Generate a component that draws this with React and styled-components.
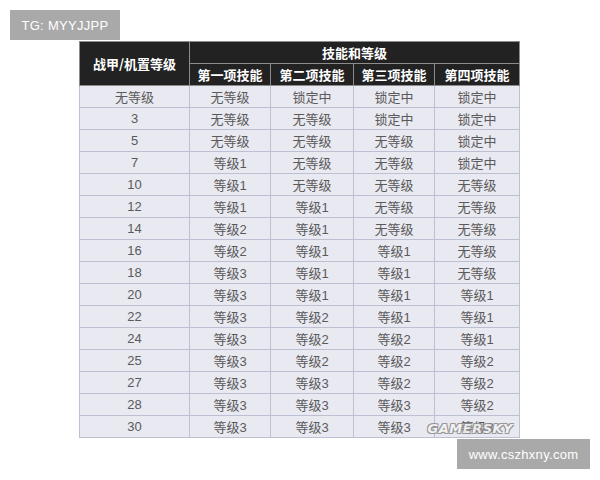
import styled, { createGlobalStyle } from 'styled-components';

const GlobalStyle = createGlobalStyle`
  body {
    margin: 0;
    background: #ffffff;
    font-family: "Liberation Sans", "Noto Sans CJK SC", sans-serif;
  }
`;

const rows = [
  ['无等级', '无等级', '锁定中', '锁定中', '锁定中'],
  ['3', '无等级', '无等级', '锁定中', '锁定中'],
  ['5', '无等级', '无等级', '无等级', '锁定中'],
  ['7', '等级1', '无等级', '无等级', '锁定中'],
  ['10', '等级1', '无等级', '无等级', '无等级'],
  ['12', '等级1', '等级1', '无等级', '无等级'],
  ['14', '等级2', '等级1', '无等级', '无等级'],
  ['16', '等级2', '等级1', '等级1', '无等级'],
  ['18', '等级3', '等级1', '等级1', '无等级'],
  ['20', '等级3', '等级1', '等级1', '等级1'],
  ['22', '等级3', '等级2', '等级1', '等级1'],
  ['24', '等级3', '等级2', '等级2', '等级1'],
  ['25', '等级3', '等级2', '等级2', '等级2'],
  ['27', '等级3', '等级3', '等级2', '等级2'],
  ['28', '等级3', '等级3', '等级3', '等级2'],
  ['30', '等级3', '等级3', '等级3', '等级3'],
];

const skills = ['第一项技能', '第二项技能', '第三项技能', '第四项技能'];
const widths = [110, 81, 83, 81, 85];

const Page = styled.div`
  position: relative;
  width: 600px;
  height: 480px;
  padding-top: 10px;
  box-sizing: border-box;
`;

const Tag = styled.div`
  display: flex;
  align-items: center;
  justify-content: center;
  width: ${p => p.$w}px;
  height: 30px;
  margin-left: ${p => p.$left}px;
  margin-top: ${p => p.$top || 0}px;
  background: #a9a9a9;
  color: #ffffff;
  font-size: 13px;
  letter-spacing: 0.3px;
`;

const TableWrap = styled.div`
  position: relative;
  width: 440px;
  margin-left: 79px;
  margin-top: 1px;
`;

const Table = styled.table`
  width: 440px;
  border-collapse: collapse;
  table-layout: fixed;
  border: 1px solid #c9cbd6;
`;

const Th = styled.th`
  height: 21px;
  padding: 0;
  background: #222222;
  color: #ffffff;
  font-family: "Noto Sans CJK SC", sans-serif;
  font-weight: 700;
  font-size: 13px;
  border: 1px solid #8c8c8c;
  text-align: center;
  vertical-align: middle;
`;

const Td = styled.td`
  height: 21px;
  padding: 0;
  background: #e9e9f1;
  color: #5a5a5a;
  font-size: 13px;
  border: 1px solid #bcc0d2;
  text-align: center;
  vertical-align: middle;
  font-family: "Liberation Sans", "Noto Sans CJK SC", sans-serif;
`;

const Watermark = styled.div`
  position: absolute;
  right: 6px;
  bottom: 2px;
  font-family: "DejaVu Sans", sans-serif;
  font-weight: 700;
  font-style: italic;
  font-size: 13px;
  letter-spacing: 0.5px;
  color: #f4f4f4;
  text-shadow: 1px 1px 0 #8a8a8a, -1px -1px 0 #8a8a8a, 1px -1px 0 #8a8a8a, -1px 1px 0 #8a8a8a;
  opacity: 0.85;
`;

export default function App() {
  return (
    <>
      <GlobalStyle />
      <Page>
        <Tag $w={110} $left={10}>TG: MYYJJPP</Tag>
        <TableWrap>
          <Table>
            <colgroup>
              {widths.map((w, i) => <col key={i} style={{ width: w }} />)}
            </colgroup>
            <thead>
              <tr>
                <Th rowSpan={2}>战甲/机置等级</Th>
                <Th colSpan={4}>技能和等级</Th>
              </tr>
              <tr>
                {skills.map(s => <Th key={s}>{s}</Th>)}
              </tr>
            </thead>
            <tbody>
              {rows.map((r, i) => (
                <tr key={i}>
                  {r.map((c, j) => <Td key={j}>{c}</Td>)}
                </tr>
              ))}
            </tbody>
          </Table>
          <Watermark>GAMERSKY</Watermark>
        </TableWrap>
        <Tag $w={133} $left={457} $top={1}>www.cszhxny.com</Tag>
      </Page>
    </>
  );
}
